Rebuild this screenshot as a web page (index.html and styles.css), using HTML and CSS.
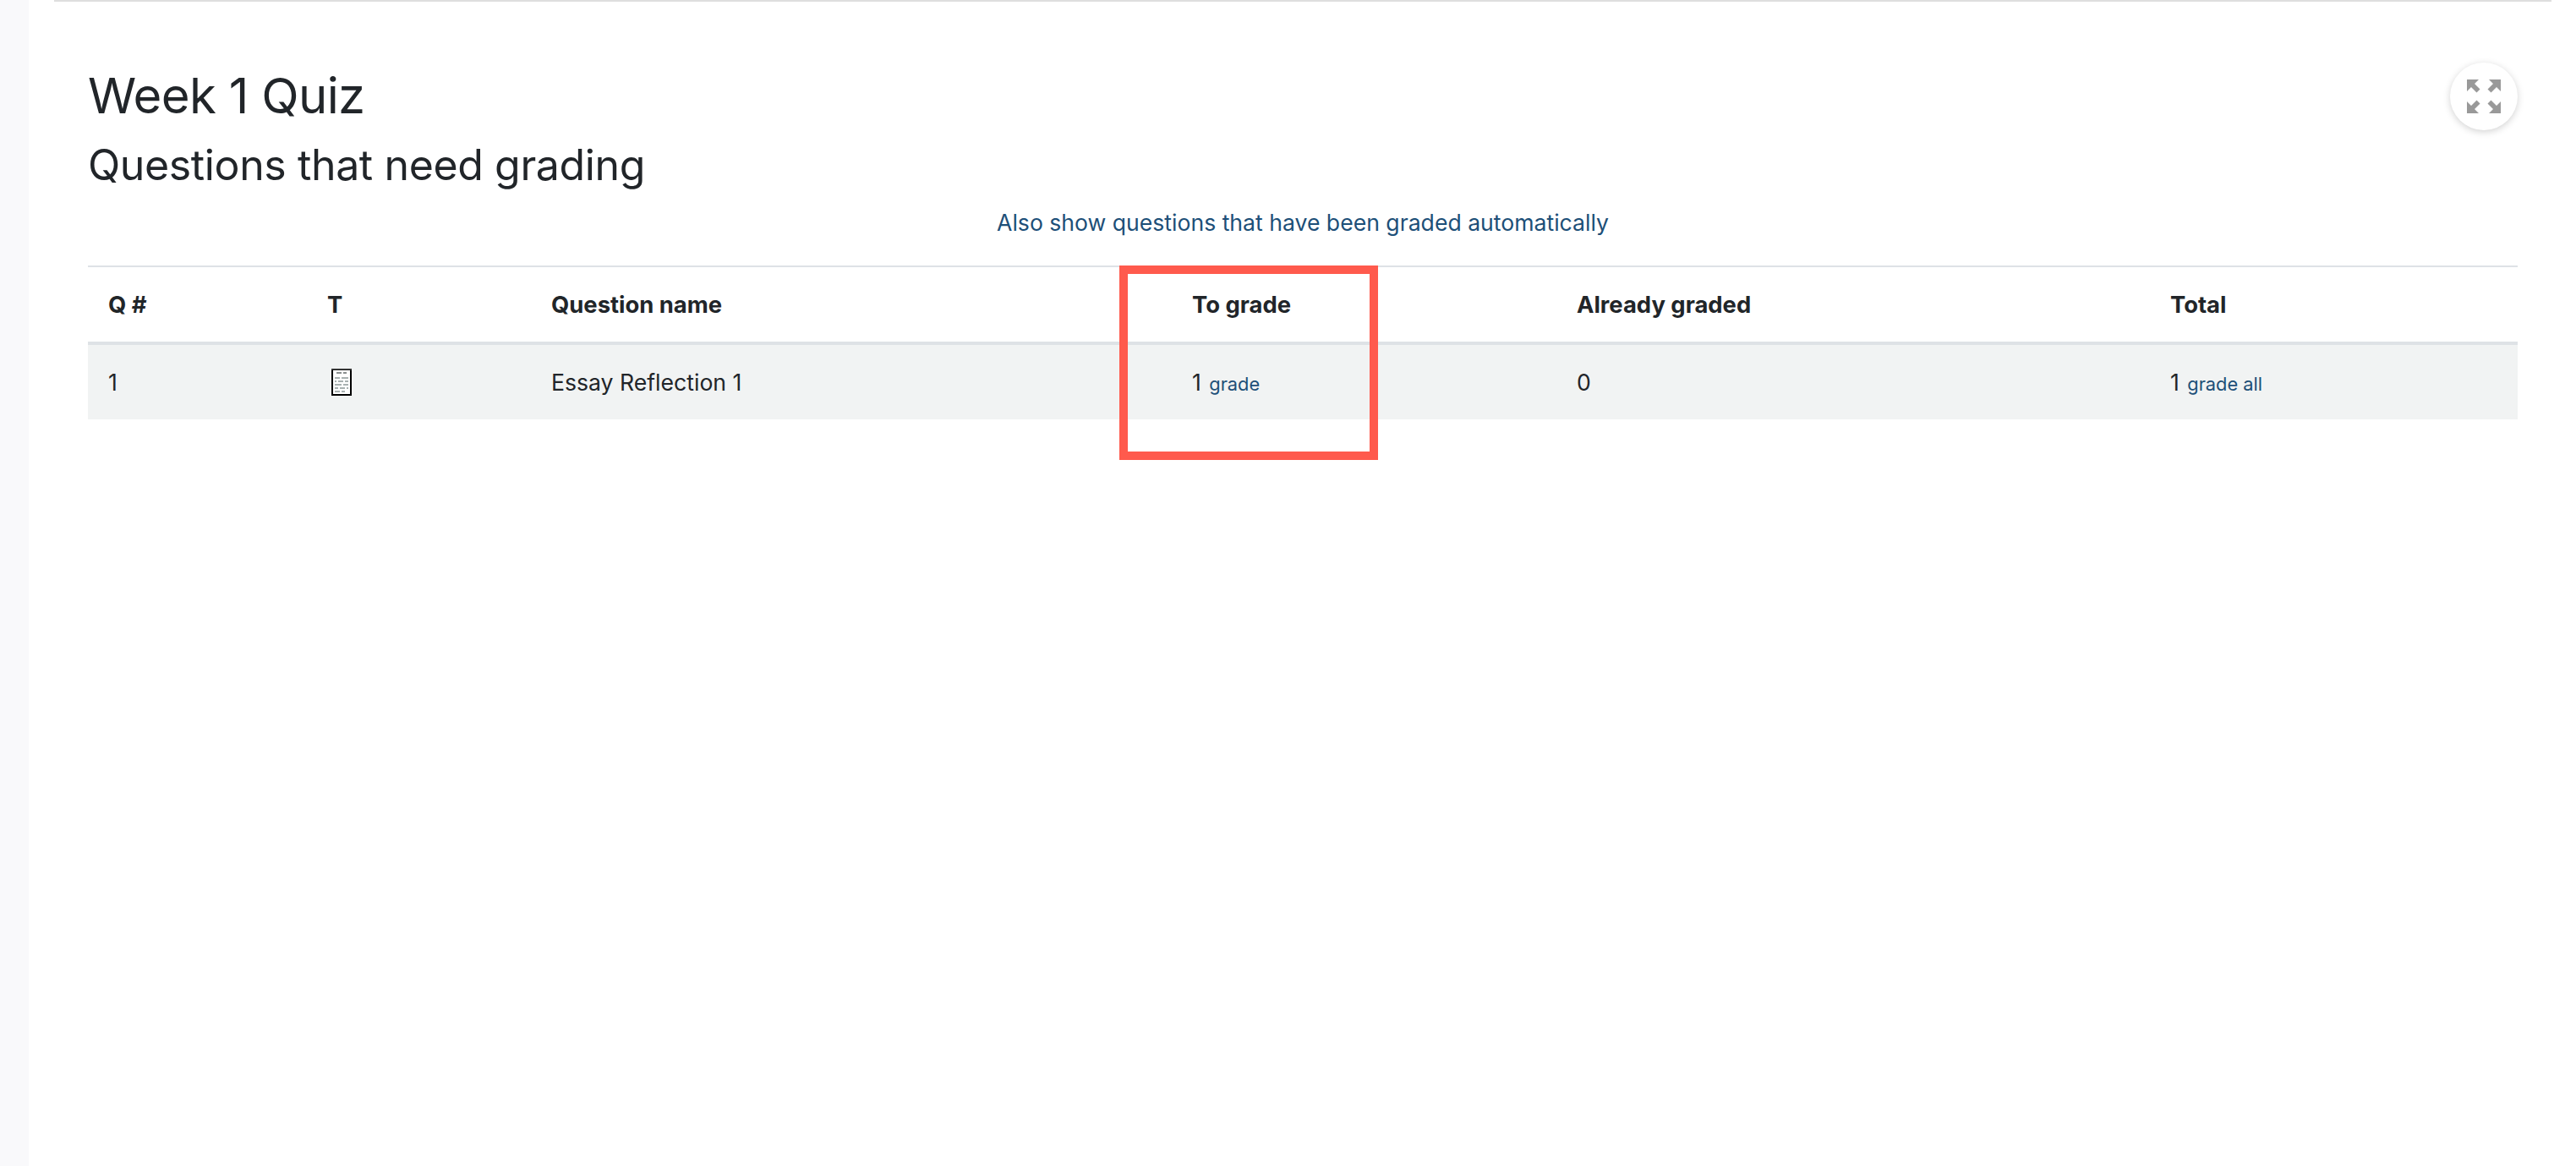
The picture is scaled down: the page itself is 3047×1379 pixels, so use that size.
FILE: index.html
```html
<!DOCTYPE html>
<html lang="en">
<head>
<meta charset="utf-8">
<title>Week 1 Quiz</title>
<link rel="stylesheet" href="styles.css">
</head>
<body>
<div class="page">
  <aside class="strip"></aside>
  <main class="main">
    <div class="content">
      <h1 class="quiz-title">Week 1 Quiz</h1>
      <h2 class="section-title">Questions that need grading</h2>
      <p class="show-all"><a href="#">Also show questions that have been graded automatically</a></p>
      <table class="grading">
        <colgroup>
          <col class="c-num"><col class="c-type"><col class="c-name"><col class="c-to"><col class="c-done"><col class="c-total">
        </colgroup>
        <thead>
          <tr><th>Q #</th><th>T</th><th>Question name</th><th>To grade</th><th>Already graded</th><th>Total</th></tr>
        </thead>
        <tbody>
          <tr>
            <td>1</td>
            <td class="icon-cell">
              <svg class="qtype" width="24" height="32" viewBox="0 0 24 32" aria-label="Essay">
                <rect x="1" y="1" width="22" height="30" fill="#fff" stroke="#000" stroke-width="2"/>
                <rect x="0" y="0" width="24" height="2" fill="#333"/>
                <g fill="#8a8f8f">
                  <rect x="6" y="4" width="6" height="2"/><rect x="14" y="4" width="4" height="2"/>
                </g>
                <g fill="#a9b1b1">
                  <rect x="4" y="10" width="6" height="2"/><rect x="12" y="10" width="8" height="2"/>
                  <rect x="4" y="14" width="2" height="2"/><rect x="8" y="14" width="6" height="2"/><rect x="16" y="14" width="4" height="2"/>
                  <rect x="4" y="18" width="8" height="2"/><rect x="14" y="18" width="6" height="2"/>
                  <rect x="4" y="22" width="4" height="2"/><rect x="10" y="22" width="6" height="2"/><rect x="18" y="22" width="2" height="2"/>
                  <rect x="4" y="26" width="6" height="2"/><rect x="12" y="26" width="4" height="2"/>
                </g>
              </svg>
            </td>
            <td>Essay Reflection 1</td>
            <td>1 <a class="small-link" href="#">grade</a></td>
            <td>0</td>
            <td>1 <a class="small-link" href="#">grade all</a></td>
          </tr>
        </tbody>
      </table>
    </div>
    <button class="fullscreen" aria-label="Full screen">
      <svg width="40" height="40" viewBox="0 0 40 40" fill="#999">
        <path d="M0 0H14L9 5L15.5 11.5L11.5 15.5L5 9L0 14Z"/>
        <path d="M40 0H26L31 5L24.5 11.5L28.5 15.5L35 9L40 14Z"/>
        <path d="M0 40H14L9 35L15.5 28.5L11.5 24.5L5 31L0 26Z"/>
        <path d="M40 40H26L31 35L24.5 28.5L28.5 24.5L35 31L40 26Z"/>
      </svg>
    </button>
  </main>
  <div class="highlight"></div>
</div>
</body>
</html>
```
FILE: styles.css
```css
* { box-sizing: border-box; }
html, body { margin: 0; height: 100%; background: #fff; }
body { font-family: Inter, "Liberation Sans", sans-serif; color: #212529; overflow: hidden; }
a { color: #1d4f78; text-decoration: none; }

.page { position: relative; display: flex; height: 1379px; }
.strip { width: 34px; flex: none; background: #f9f9fb; }
.main { position: relative; flex: 1; padding-left: 30px; padding-right: 29px; }
.main::before { content: ""; display: block; height: 2px; background: #dedede; }

.content { padding: 0 40px; }
.quiz-title { margin: 76px 0 0; font-size: 58px; line-height: 70px; font-weight: 400; letter-spacing: -0.65px; }
.section-title { margin: 17px 0 0; font-size: 50px; line-height: 60px; font-weight: 400; letter-spacing: -0.38px; }
.show-all { margin: 17px 0 0; text-align: center; font-size: 26.6px; line-height: 42px; }

.grading { width: 2874px; table-layout: fixed; border-collapse: collapse; margin-top: 30px; font-size: 26.6px; }
.c-num { width: 259px; }
.c-type { width: 265px; }
.c-name { width: 758px; }
.c-to { width: 455px; }
.c-done { width: 702px; }
.c-total { width: 435px; }
.grading th { height: 91px; padding: 0 24px; text-align: left; font-size: 27.4px; font-weight: 700; border-top: 2px solid #dee2e6; border-bottom: 4px solid #dee2e6; }
.grading td { height: 90px; padding: 0 24px; background: #f1f3f3; }
.icon-cell { line-height: 0; }
.qtype { display: inline-block; vertical-align: middle; margin-left: 5px; }
.small-link { font-size: 21.8px; margin-left: 2px; }

.fullscreen { position: absolute; top: 74px; right: 69px; width: 80px; height: 80px; padding: 0; border: 0; border-radius: 50%; background: #fff; box-shadow: 0 2px 8px rgba(0,0,0,.18); display: flex; align-items: center; justify-content: center; }
.highlight { position: absolute; left: 1324px; top: 314px; width: 306px; height: 230px; border: 10px solid #ff5a4d; }
```
